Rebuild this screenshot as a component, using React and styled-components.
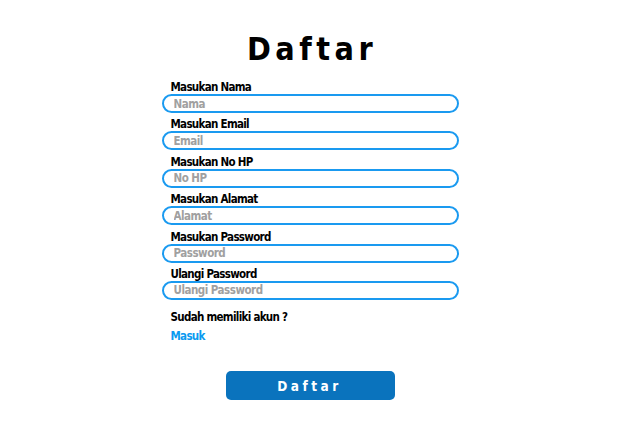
import React from "react";
import styled, { createGlobalStyle } from "styled-components";

const Global = createGlobalStyle`
  html, body { margin: 0; padding: 0; background: #fff; }
  body { font-family: "DejaVu Sans Condensed", "DejaVu Sans", sans-serif; }
`;

const Page = styled.div`
  width: 620px;
  height: 440px;
  display: flex;
  flex-direction: column;
  align-items: center;
  box-sizing: border-box;
  padding-top: 30px;
`;

const Title = styled.h1`
  margin: 0 0 12px 0;
  font-family: "DejaVu Sans Condensed", sans-serif;
  font-weight: bold;
  font-size: 32px;
  line-height: 38px;
  letter-spacing: 4.5px;
  padding-left: 4px;
  color: #000;
`;

const Form = styled.form`
  width: 297px;
  display: flex;
  flex-direction: column;
`;

const Field = styled.div`
  display: flex;
  flex-direction: column;
  margin-bottom: 4.4px;
`;

const Text = `
  font-weight: bold;
  font-size: 11.5px;
  line-height: 14px;
  padding-left: 9px;
  letter-spacing: -0.7px;
`;

const Label = styled.label`
  ${Text}
  color: #000;
`;

const Input = styled.input`
  box-sizing: border-box;
  width: 297px;
  height: 19px;
  border: 2.5px solid #1a9af0;
  border-radius: 10px;
  padding: 0 10px;
  font-family: "DejaVu Sans Condensed", sans-serif;
  font-weight: bold;
  font-size: 11.5px;
  letter-spacing: -0.5px;
  outline: none;
  &::placeholder { color: #a0a0a0; }
`;

const Question = styled.div`
  ${Text}
  margin-top: 6px;
  color: #000;
`;

const LinkText = styled.a`
  ${Text}
  margin-top: 5px;
  color: #0a9af0;
  text-decoration: none;
`;

const Button = styled.button`
  margin-top: 28px;
  width: 169px;
  height: 29px;
  border: none;
  border-radius: 5px;
  background: #0a73bd;
  color: #fff;
  font-family: "DejaVu Sans Condensed", sans-serif;
  font-weight: bold;
  font-size: 13.5px;
  letter-spacing: 3.5px;
  padding-left: 5px;
`;

const fields = [
  ["Masukan Nama", "Nama"],
  ["Masukan Email", "Email"],
  ["Masukan No HP", "No HP"],
  ["Masukan Alamat", "Alamat"],
  ["Masukan Password", "Password"],
  ["Ulangi Password", "Ulangi Password"],
];

export default function App() {
  return (
    <>
      <Global />
      <Page>
        <Title>Daftar</Title>
        <Form onSubmit={(e) => e.preventDefault()}>
          {fields.map(([l, p]) => (
            <Field key={l}>
              <Label>{l}</Label>
              <Input placeholder={p} type={p.includes("Password") ? "password" : "text"} />
            </Field>
          ))}
          <Question>Sudah memiliki akun ?</Question>
          <LinkText href="#">Masuk</LinkText>
        </Form>
        <Button>Daftar</Button>
      </Page>
    </>
  );
}
